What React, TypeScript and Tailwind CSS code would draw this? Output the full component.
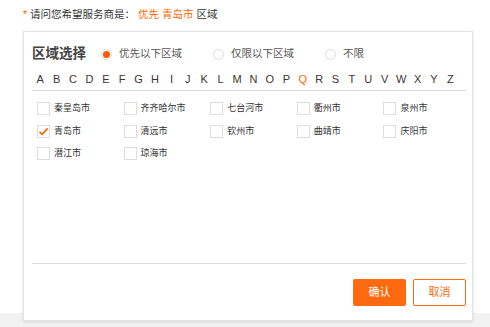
import React from "react";

const letters = "ABCDEFGHIJKLMNOPQRSTUVWXYZ".split("");
const cities: { name: string; checked?: boolean }[] = [
  { name: "秦皇岛市" },
  { name: "齐齐哈尔市" },
  { name: "七台河市" },
  { name: "衢州市" },
  { name: "泉州市" },
  { name: "青岛市", checked: true },
  { name: "清远市" },
  { name: "钦州市" },
  { name: "曲靖市" },
  { name: "庆阳市" },
  { name: "潜江市" },
  { name: "琼海市" },
];

function Radio({ checked, label }: { checked?: boolean; label: string }) {
  return (
    <div className="w-[112px] shrink-0 flex items-center whitespace-nowrap">
      <span className="w-[11px] h-[11px] shrink-0 rounded-full border border-[#dcdcdc] bg-white flex items-center justify-center">
        {checked && <span className="w-[7px] h-[7px] rounded-full bg-[#ff5a00]" />}
      </span>
      <span className="ml-[7px] text-[10.5px] text-[#555]">{label}</span>
    </div>
  );
}

export default function App() {
  return (
    <div
      className="w-[490px] h-[327px] overflow-hidden flex flex-col bg-[linear-gradient(to_bottom,#ffffff_313px,#f2f2f2_313px)]"
      style={{ fontFamily: '"Liberation Sans", "Noto Sans CJK SC", sans-serif' }}
    >
      <div className="h-[31px] flex items-center pl-[23px] text-[10.5px] text-[#333] pb-[1px] whitespace-nowrap">
        <span className="text-[#ff6600] mr-[3px]">*</span>
        <span>请问您希望服务商是：</span>
        <span className="text-[#ff6600] ml-[3px]">优先 青岛市</span>
        <span className="ml-[3px]">区域</span>
      </div>
      <div className="ml-[23px] w-[450px] h-[290px] bg-white border border-[#e4e4e4] shadow-[0_1px_3px_rgba(0,0,0,0.12)] flex flex-col pl-[8px]">
        <div className="mt-[12px] h-[20px] flex items-center whitespace-nowrap">
          <span className="w-[69px] shrink-0 text-[13.5px] font-bold text-[#444]">区域选择</span>
          <Radio checked label="优先以下区域" />
          <Radio label="仅限以下区域" />
          <Radio label="不限" />
        </div>
        <div className="mt-[5px] h-[21px] flex items-start pt-[2px]">
          {letters.map((l) => (
            <span
              key={l}
              className={`w-[16.42px] shrink-0 text-center text-[11px] leading-[16px] ${l === "Q" ? "text-[#ff6600]" : "text-[#3f3330]"}`}
            >
              {l}
            </span>
          ))}
        </div>
        <div className="w-[434px] h-[1px] bg-[#dcdcdc]" />
        <div className="mt-[11px] pl-[5px] grid grid-cols-[repeat(5,86.6px)]">
          {cities.map((c) => (
            <div key={c.name} className="h-[22.5px] flex items-start whitespace-nowrap">
              <span className="w-[13px] h-[13px] shrink-0 border border-[#dddddd] bg-white flex items-center justify-center">
                {c.checked && (
                  <svg width="11" height="11" viewBox="0 0 11 11">
                    <path d="M1.5 5.8 L4.2 8.4 L9.6 2.4" fill="none" stroke="#ff6600" strokeWidth="1.6" />
                  </svg>
                )}
              </span>
              <span className="ml-[4px] text-[9px] leading-[13px] text-[#333]">{c.name}</span>
            </div>
          ))}
        </div>
        <div className="flex-1" />
        <div className="w-[434px] h-[1px] bg-[#dcdcdc]" />
        <div className="w-[434px] mt-[15px] mb-[14px] flex justify-end gap-[7px]">
          <button className="w-[53px] h-[27px] rounded-[2px] bg-[#ff6a10] text-white text-[11px]">确认</button>
          <button className="w-[53px] h-[27px] rounded-[2px] bg-white border border-[#ff6a10] text-[#ff6a10] text-[11px]">取消</button>
        </div>
      </div>
    </div>
  );
}
